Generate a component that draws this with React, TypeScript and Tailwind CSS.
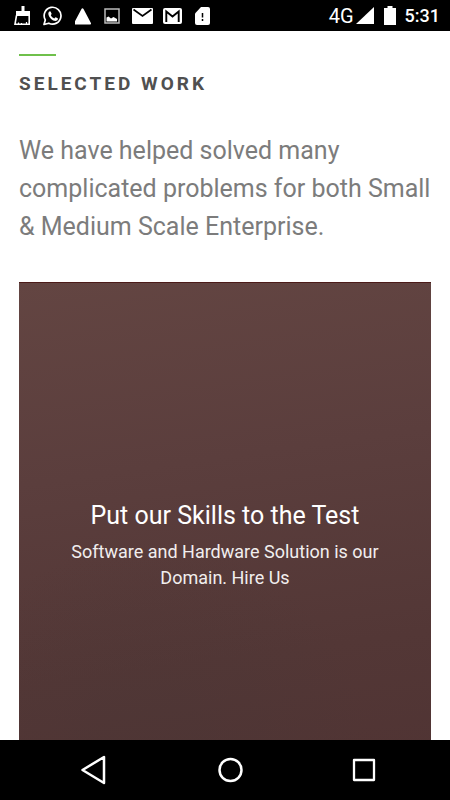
import type { ReactNode } from "react";

function Glyph({ label, width, children }: { label: string; width: number; children: ReactNode }) {
  return (
    <svg role="img" aria-label={label} width={width} height={20} viewBox={`0 0 ${width} 20`} className="shrink-0">
      {children}
    </svg>
  );
}

function StatusBar() {
  return (
    <header className="flex h-[31px] shrink-0 items-center justify-between bg-black pr-[10px] pl-[14px] text-white">
      <div className="flex items-center">
        <div className="flex items-center gap-3">
          <Glyph label="Cleaner" width={17}>
            <path d="M7.500 0h3v5h5.500v5H2V5h5.500z" fill="#fff" />
            <path d="M2.500 9.500 1 18.200h14.200V9.500" fill="none" stroke="#fff" strokeWidth="1.600" />
            <path d="M4.500 18v-1.500M7.500 18v-1M12.500 18v-2" stroke="#fff" strokeWidth="1.200" />
          </Glyph>
          <Glyph label="WhatsApp" width={20}>
            <path d="M1 18.500 2.300 13.900A8.400 8.400 0 1 1 5.800 17.200z" fill="none" stroke="#fff" strokeWidth="1.700" strokeLinejoin="round" />
            <path d="M5.800 6.100c.8-1 1.600-1 2-.2l.8 1.900c.1.500-.7 1.200-.8 1.500.7 1.500 1.900 2.500 3.400 3.100.5-.2 1-1.300 1.500-1.200l2 1c.6.400-.1 2-.9 2.400-1.700.9-4.100-.3-5.700-1.700-1.500-1.400-3.700-4.500-2.300-6.800z" fill="#fff" />
          </Glyph>
          <Glyph label="Alert" width={18}>
            <path d="M7.500 3.300 15 17.500H0z" fill="#fff" stroke="#fff" strokeWidth="2" strokeLinejoin="round" />
          </Glyph>
        </div>
        <div className="ml-[9px] flex items-center gap-[10px]">
          <Glyph label="Picture" width={20}>
            <rect x="3" y="3" width="14" height="14" fill="none" stroke="#bbb" strokeWidth="1.500" />
            <path d="M4.500 15.500v-4l2-1 2.500 2 2.500-1.500 3.500 2v2.500z" fill="#fff" />
          </Glyph>
          <Glyph label="Mail" width={21}>
            <rect x="0" y="2" width="21" height="16" rx="1" fill="#fff" />
            <path d="m1.500 3.500 9 6.500 9-6.500" fill="none" stroke="#000" strokeWidth="1.700" />
          </Glyph>
          <Glyph label="Gmail" width={19}>
            <rect x="0" y="2" width="19" height="16" rx="2" fill="#fff" />
            <path d="M3.300 16V5.500l6.200 5 6.200-5V16" fill="none" stroke="#000" strokeWidth="1.900" />
          </Glyph>
        </div>
        <div className="ml-[13px]">
          <Glyph label="SIM card alert" width={16}>
            <path d="M6 1h7a2 2 0 0 1 2 2v14a2 2 0 0 1-2 2H2a2 2 0 0 1-2-2V7.500z" fill="#fff" />
            <path d="M7.500 7v4.500M7.500 13v2" stroke="#000" strokeWidth="1.500" />
          </Glyph>
        </div>
      </div>
      <div className="flex items-center">
        <span className="text-[20px] leading-5">4G</span>
        <div className="ml-[2px] flex items-center gap-[10px]">
          <Glyph label="Signal" width={18}>
            <path d="M18 1v17H0z" fill="#fff" />
          </Glyph>
          <Glyph label="Battery" width={12}>
            <path d="M3.500 0h5v2H12v17H0V2h3.500z" fill="#fff" />
          </Glyph>
        </div>
        <time className="ml-[9px] text-lg leading-5 font-medium">5:31</time>
      </div>
    </header>
  );
}

function NavigationBar() {
  return (
    <nav className="flex h-[60px] shrink-0 items-center justify-between bg-black pr-[74px] pl-[78px]">
      <button type="button" aria-label="Back">
        <svg width="30" height="32" viewBox="0 0 30 32" fill="none" stroke="#fff" strokeWidth="2.500" strokeLinejoin="round">
          <path d="M26 3v26L4.500 16z" />
        </svg>
      </button>
      <button type="button" aria-label="Home">
        <svg width="28" height="28" viewBox="0 0 28 28" fill="none" stroke="#fff" strokeWidth="2.500">
          <circle cx="14.500" cy="14" r="11" />
        </svg>
      </button>
      <button type="button" aria-label="Recent apps">
        <svg width="24" height="24" viewBox="0 0 24 24" fill="none" stroke="#fff" strokeWidth="2.300" strokeLinejoin="round">
          <path d="M2 2h20v20H2z" />
        </svg>
      </button>
    </nav>
  );
}

export default function App() {
  return (
    <div className="flex h-screen flex-col bg-white font-[Roboto,sans-serif]">
      <StatusBar />
      <main className="min-h-0 flex-1 overflow-hidden px-[19px] pt-[23px]">
        <div className="h-[2px] w-[37px] bg-[#6fc04b]" />
        <h1 className="mt-4 text-[19px] leading-6 font-bold tracking-[3px] text-[#505050]">SELECTED WORK</h1>
        <p className="mt-9 text-[25px] leading-[38px] text-[#7c7c7c]">
          We have helped solved many complicated problems for both Small &amp; Medium Scale Enterprise.
        </p>
        <a
          href="#hire-us"
          className="mt-9 flex min-h-[522px] flex-col items-center justify-center border-t border-[#4c1b19] bg-[radial-gradient(circle_at_32%_92%,#4a363580,transparent_40%),linear-gradient(172deg,#634542_0%,#5b3e3d_35%,#533736_70%,#4f3333_100%)] px-[50px] text-center text-white"
        >
          <h2 className="text-[25px] leading-[38px]">Put our Skills to the Test</h2>
          <p className="mt-1 text-[18px] leading-[26px] text-[#f1eeee]">
            Software and Hardware Solution is our Domain. Hire Us
          </p>
        </a>
      </main>
      <NavigationBar />
    </div>
  );
}
